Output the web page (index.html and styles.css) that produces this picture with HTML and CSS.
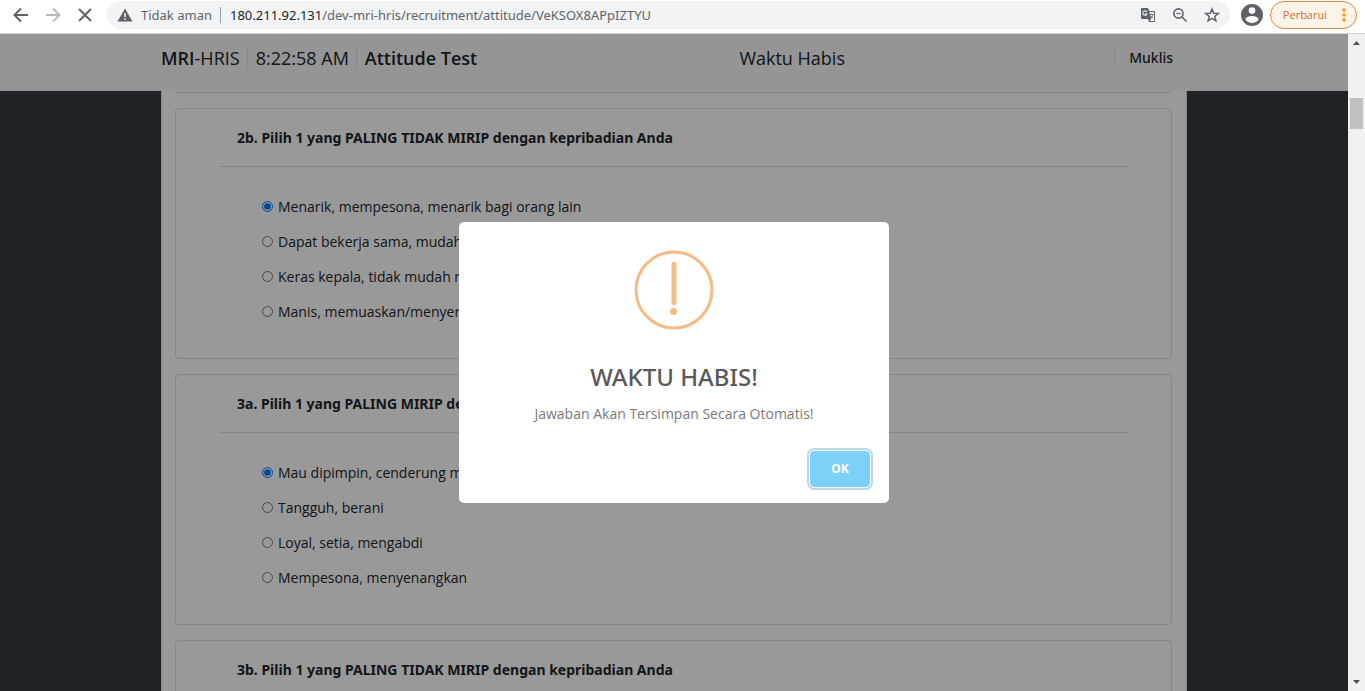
FILE: index.html
```html
<!DOCTYPE html>
<html lang="id">
<head>
<meta charset="utf-8">
<title>MRI-HRIS | Attitude Test</title>
<link rel="stylesheet" href="styles.css">
</head>
<body>
<div class="toolbar">
  <div class="nav">
    <button class="icon-btn" aria-label="Kembali"><svg width="16" height="16" viewBox="0 0 16 16" fill="none" stroke="#5f6368" stroke-width="2"><path d="M15 8H2M8 1.5 1.5 8 8 14.5"/></svg></button>
    <button class="icon-btn" aria-label="Maju"><svg width="16" height="16" viewBox="0 0 16 16" fill="none" stroke="#bababa" stroke-width="2"><path d="M1 8h13M8 1.500 14.500 8 8 14.500"/></svg></button>
    <button class="icon-btn" aria-label="Berhenti"><svg width="16" height="16" viewBox="0 0 16 16" fill="none" stroke="#5f6368" stroke-width="2"><path d="M2 2l12 12M14 2 2 14"/></svg></button>
  </div>
  <div class="address">
    <button class="security"><svg width="16" height="16" viewBox="0 0 16 16"><path fill="#5f6368" d="M8 1.500 15.500 14.500H.5z"/><path fill="#f1f3f4" d="M7.200 6h1.600v4H7.200zM7.200 11.200h1.600v1.600H7.200z"/></svg><span>Tidak aman</span></button>
    <div class="url"><span class="host">180.211.92.131</span>/dev-mri-hris/recruitment/attitude/VeKSOX8APpIZTYU</div>
    <div class="actions">
      <button class="icon-btn" aria-label="Terjemahkan"><svg width="16" height="16" viewBox="0 0 16 16"><path fill="#5f6368" d="M2 1h6l1 3h5a1 1 0 0 1 1 1v9a1 1 0 0 1-1 1H9l-1-3H2a1 1 0 0 1-1-1V2a1 1 0 0 1 1-1z"/><path fill="#f1f3f4" d="M9.300 5 11.300 11.800 9.600 14H14V5z"/><path fill="none" stroke="#f1f3f4" stroke-width="1.100" d="M6.900 4.900A2.200 2.200 0 1 0 7 7H5"/><path fill="none" stroke="#5f6368" stroke-width=".8" d="M10 7.500h3.500M11.800 6.500v1M12.800 7.500c-.4 2-1 2.700-1.800 3.300M11 8.800c.5 1.200 1 1.600 2 2.300"/></svg></button>
      <button class="icon-btn" aria-label="Zoom"><svg width="16" height="16" viewBox="0 0 16 16" fill="none" stroke="#5f6368" stroke-width="1.600"><circle cx="6.500" cy="6.500" r="4.600"/><path d="M10 10l4.500 4.500"/><path stroke-width="1.200" d="M4.300 6.500h4.400"/></svg></button>
      <button class="icon-btn" aria-label="Bookmark"><svg width="16" height="16" viewBox="0 0 16 16" fill="none" stroke="#5f6368" stroke-width="1.500"><path d="M8 2l1.700 4.200 4.500.3-3.500 2.900 1.200 4.400L8 11.400l-3.900 2.400 1.200-4.400-3.500-2.900 4.500-.3z"/></svg></button>
    </div>
  </div>
  <button class="icon-btn" aria-label="Profil"><svg width="22" height="22" viewBox="0 0 22 22"><circle cx="11" cy="11" r="11" fill="#5f6368"/><circle cx="11" cy="6.600" r="3.300" fill="#fff"/><path fill="#fff" d="M4.400 15.400c0-2.200 4.400-3.400 6.600-3.400s6.600 1.200 6.600 3.400a8 8 0 0 1-13.200 0z"/></svg></button>
  <button class="update"><span>Perbarui</span><svg width="4" height="14" viewBox="0 0 4 14" fill="#f29900"><circle cx="2" cy="2" r="1.700"/><circle cx="2" cy="7" r="1.700"/><circle cx="2" cy="12" r="1.700"/></svg></button>
</div>

<div class="viewport">
  <div class="page">
    <header class="header">
      <div class="header-inner">
        <div class="brand"><b>MRI</b>-HRIS</div>
        <div class="sep">8:22:58 AM</div>
        <div class="sep"><b>Attitude Test</b></div>
        <div class="timer">Waktu Habis</div>
        <div class="user">Muklis</div>
      </div>
    </header>
    <main class="content">
      <div class="card-end"></div>
      <fieldset class="card">
        <div class="card-title" id="q2b">2b. Pilih 1 yang PALING TIDAK MIRIP dengan kepribadian Anda</div>
        <div class="options" role="radiogroup" aria-labelledby="q2b">
          <label><input type="radio" name="q2b" checked>Menarik, mempesona, menarik bagi orang lain</label>
          <label><input type="radio" name="q2b">Dapat bekerja sama, mudah menyetujui</label>
          <label><input type="radio" name="q2b">Keras kepala, tidak mudah menyerah</label>
          <label><input type="radio" name="q2b">Manis, memuaskan/menyenangkan</label>
        </div>
      </fieldset>
      <fieldset class="card">
        <div class="card-title" id="q3a">3a. Pilih 1 yang PALING MIRIP dengan kepribadian Anda</div>
        <div class="options" role="radiogroup" aria-labelledby="q3a">
          <label><input type="radio" name="q3a" checked>Mau dipimpin, cenderung mengikuti</label>
          <label><input type="radio" name="q3a">Tangguh, berani</label>
          <label><input type="radio" name="q3a">Loyal, setia, mengabdi</label>
          <label><input type="radio" name="q3a">Mempesona, menyenangkan</label>
        </div>
      </fieldset>
      <fieldset class="card">
        <div class="card-title" id="q3b">3b. Pilih 1 yang PALING TIDAK MIRIP dengan kepribadian Anda</div>
      </fieldset>
    </main>
    <div class="overlay">
      <div class="modal" role="dialog" aria-modal="true" aria-labelledby="modal-title">
        <svg class="modal-icon" width="80" height="80" viewBox="0 0 80 80"><circle cx="40" cy="40" r="38" fill="none" stroke="#f5bb87" stroke-width="3"/><rect x="37.500" y="12" width="5" height="43" rx="2" fill="#f5bb87"/><circle cx="39.500" cy="61.500" r="3.500" fill="#f5bb87"/></svg>
        <h2 class="modal-title" id="modal-title">WAKTU HABIS!</h2>
        <p class="modal-text">Jawaban Akan Tersimpan Secara Otomatis!</p>
        <div class="modal-footer"><button class="ok">OK</button></div>
      </div>
    </div>
  </div>
  <div class="scrollbar" aria-hidden="true">
    <svg width="17" height="17" viewBox="0 0 17 17"><path fill="#505050" d="M5 11h7L8.500 7z"/></svg>
    <div class="track"><div class="thumb"></div></div>
    <svg width="17" height="17" viewBox="0 0 17 17"><path fill="#505050" d="M5 6h7l-3.500 4z"/></svg>
  </div>
</div>
</body>
</html>
```
FILE: styles.css
```css
* { box-sizing: border-box; }

body {
  margin: 0;
  height: 100vh;
  display: flex;
  flex-direction: column;
  overflow: hidden;
  font: 14px/20px "Open Sans", "Noto Sans", sans-serif;
  color: #212529;
}

button {
  font: inherit;
  color: inherit;
  background: none;
  border: 0;
  padding: 0;
  display: flex;
  align-items: center;
}

/* Browser toolbar */
.toolbar {
  display: flex;
  align-items: center;
  gap: 11px;
  height: 34px;
  flex: none;
  padding: 0 8px 3px 13px;
  background: #fff;
  border-bottom: 1px solid #d5d7da;
  font-family: "Noto Sans", "Open Sans", sans-serif;
  font-size: 13px;
}
.nav { display: flex; gap: 16px; margin-right: 3px; }
.address {
  flex: 1;
  display: flex;
  align-items: center;
  height: 28px;
  padding: 0 10px;
  border-radius: 14px;
  background: #f1f3f4;
  color: #5f6368;
}
.security {
  gap: 8px;
  padding-right: 8px;
  border-right: 1px solid #9a9da1;
  height: 16px;
}
.url { flex: 1; padding-left: 9px; white-space: nowrap; }
.host { color: #202124; }
.actions { display: flex; gap: 16px; }
.update {
  gap: 15px;
  height: 28px;
  margin-left: -4px;
  padding: 0 10px 0 12px;
  border: 1px solid #d98a3d;
  border-radius: 14px;
  background: #fef3e8;
  color: #c9702b;
  font-family: "Open Sans", sans-serif;
  font-size: 11px;
}

/* Page */
.viewport { flex: 1; display: flex; min-height: 0; }
.page {
  position: relative;
  flex: 1;
  display: flex;
  flex-direction: column;
  overflow: hidden;
  background: #343a40;
}
.header { background: #f8f9fa; flex: none; }
.header-inner {
  display: flex;
  align-items: flex-start;
  max-width: 1026px;
  height: 57px;
  margin: 0 auto;
  padding: 14px 14px 0 0;
  font-size: 18px;
  line-height: 21px;
  font-weight: 500;
}
.header b { font-weight: 600; }
.sep, .user {
  margin-left: 7px;
  padding-left: 8px;
  border-left: 1px solid #dee2e6;
}
.timer { flex: 1; text-align: center; }
.user {
  padding-left: 14px;
  font-family: "Noto Sans", "Open Sans", sans-serif;
  font-size: 14px;
  line-height: 20px;
}

.content {
  width: 100%;
  max-width: 1026px;
  margin: 0 auto;
  padding: 0 14px 0 13px;
  flex: 1;
  display: flex;
  flex-direction: column;
  gap: 15px;
  overflow: hidden;
  background: #fff;
  border: solid #dfdfdf;
  border-width: 0 1px;
}
.card-end {
  flex: none;
  height: 2px;
  border-bottom: 1px solid #dfdfdf;
}
.card {
  flex: none;
  margin: 0;
  padding: 0 43px;
  border: 1px solid #dfdfdf;
  border-radius: 4px;
}
.card-title {
  padding: 19px 18px 18px;
  border-bottom: 1px solid #dfdfdf;
  font-family: "Noto Sans", "Open Sans", sans-serif;
  font-weight: 700;
}
.options {
  display: flex;
  flex-direction: column;
  padding: 22px 43px 29px;
}
.options label {
  display: flex;
  align-items: center;
  gap: 5px;
  height: 35px;
}
.options input { width: 11px; height: 11px; margin: 0; }

/* Dialog */
.overlay {
  position: absolute;
  inset: 0;
  display: grid;
  place-items: center;
  background: rgba(0, 0, 0, .4);
}
.modal {
  width: 430px;
  padding: 28px 16px 13px;
  border-radius: 5px;
  background: #fff;
  text-align: center;
}
.modal-icon { display: block; margin: 0 auto; }
.modal-title {
  margin: 31px 0 0;
  font-family: "Noto Sans", "Open Sans", sans-serif;
  font-size: 24px;
  line-height: 32px;
  font-weight: 500;
  color: #595959;
}
.modal-text { margin: 11px 0 0; color: #797979; }
.modal-footer { display: flex; justify-content: flex-end; padding-top: 24px; }
.ok {
  justify-content: center;
  width: 66px;
  height: 42px;
  border: 3px solid #fff;
  border-radius: 7px;
  background: #7cd1f9;
  background-clip: padding-box;
  outline: 2px solid #bbd7ee;
  outline-offset: -2px;
  color: #fff;
  font-size: 12px;
  font-weight: 700;
}

/* Scrollbar */
.scrollbar {
  flex: none;
  width: 17px;
  display: flex;
  flex-direction: column;
  background: #f1f1f1;
}
.track { flex: 1; padding: 47px 2px 0; }
.thumb { height: 31px; background: #c1c1c1; }
```
